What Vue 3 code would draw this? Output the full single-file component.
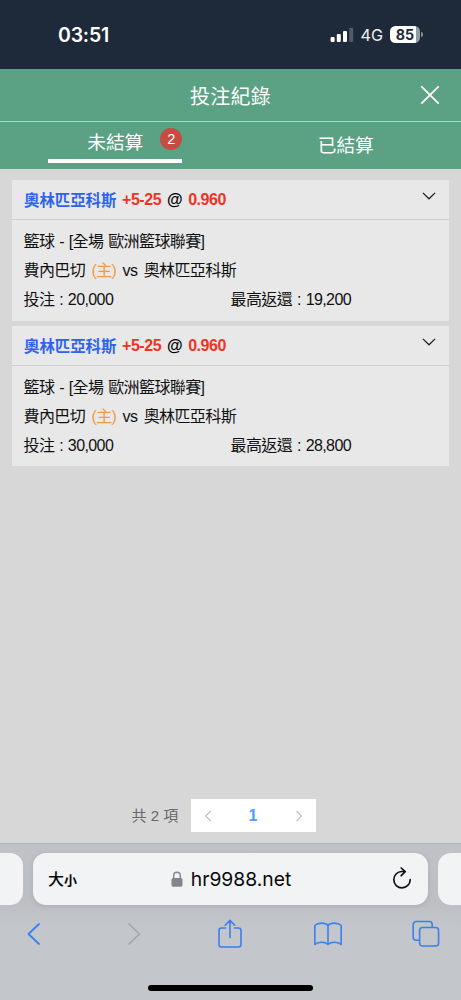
<script setup>
const bets = [
  { id: 1, stake: '20,000', payout: '19,200' },
  { id: 2, stake: '30,000', payout: '28,800' },
]
</script>

<template>
  <div class="screen">
    <div class="status">
      <span class="time">03:51</span>
      <div class="indicators">
        <svg class="signal" width="24" height="16" viewBox="0 0 24 16">
          <rect x="0.6" y="10" width="4" height="5" rx="1.1" fill="#fff" />
          <rect x="6.8" y="7" width="4" height="8" rx="1.1" fill="#fff" />
          <rect x="13" y="4" width="4" height="11" rx="1.1" fill="#fff" />
          <rect x="19.2" y="0.8" width="4" height="14.2" rx="1.1" fill="#505b67" />
        </svg>
        <span class="net">4G</span>
        <div class="battery"><span>85</span></div>
        <i class="cap"></i>
      </div>
    </div>

    <header class="title-bar">
      <h1>投注紀錄</h1>
      <svg class="close" width="20" height="20" viewBox="0 0 20 20">
        <path d="M1.3 1.3 18.7 18.7M18.7 1.3 1.3 18.7" stroke="#fff" stroke-width="1.8" fill="none" />
      </svg>
    </header>
    <nav class="tabs">
      <div class="tab">
        <div class="active"><span>未結算</span><b class="badge">2</b></div>
      </div>
      <div class="tab"><span class="settled">已結算</span></div>
    </nav>

    <main>
      <section v-for="bet in bets" :key="bet.id" class="card">
        <div class="head">
          <span class="pick">奧林匹亞科斯</span>
          <span class="odds">+5-25</span>
          <span class="at">@</span>
          <span class="odds">0.960</span>
          <svg class="chevron" width="14" height="8" viewBox="0 0 14 8">
            <path d="M.9.9 7 6.8 13.1.9" stroke="#222" stroke-width="1.3" fill="none" />
          </svg>
        </div>
        <div class="body">
          <div class="line league">籃球 - [全場 歐洲籃球聯賽]</div>
          <div class="line teams"><span>費內巴切</span><span class="home">(主)</span><span>vs</span><span>奧林匹亞科斯</span></div>
          <div class="line sums"><span>投注 : {{ bet.stake }}</span><span>最高返還 : {{ bet.payout }}</span></div>
        </div>
      </section>
      <div class="pager">
        <span class="total">共 2 項</span>
        <div class="pages">
          <svg width="8" height="12" viewBox="0 0 8 12"><path d="M6.6 1 1.6 6l5 5" stroke="#c0c4cc" stroke-width="1.4" fill="none" /></svg>
          <b>1</b>
          <svg width="8" height="12" viewBox="0 0 8 12"><path d="m1.5 1 5 5-5 5" stroke="#c0c4cc" stroke-width="1.4" fill="none" /></svg>
        </div>
      </div>
    </main>

    <footer>
      <div class="addresses">
        <div class="peek left"></div>
        <div class="address">
          <span class="aa">大<small>小</small></span>
          <div class="host">
            <svg width="12" height="16" viewBox="0 0 12 16">
              <path d="M2.7 8V4.6a3.3 3.3 0 0 1 6.6 0V8" stroke="#85868a" stroke-width="1.4" fill="none" />
              <rect x=".5" y="7" width="11" height="8.7" rx="1.6" fill="#85868a" />
            </svg>
            <span>hr9988.net</span>
          </div>
          <svg class="reload" width="20" height="23" viewBox="0 0 20 23">
            <path d="M11.2 4.500H9.800a8.200 8.200 0 1 0 8.400 8.200M9.200 1l4 3.700-4 4" stroke="#111" stroke-width="1.700" fill="none" stroke-linecap="round" stroke-linejoin="round" />
          </svg>
        </div>
        <div class="peek right"></div>
      </div>
      <div class="tools">
        <svg width="28" height="30" viewBox="0 0 28 30"><path d="M19 5 8.500 15 19 25" stroke="#3b7ff0" stroke-width="1.8" fill="none" stroke-linecap="round" stroke-linejoin="round" /></svg>
        <svg width="28" height="30" viewBox="0 0 28 30"><path d="M11 5 21.500 15 11 25" stroke="#a2a5aa" stroke-width="1.600" fill="none" stroke-linecap="round" stroke-linejoin="round" /></svg>
        <svg width="28" height="30" viewBox="0 0 28 30"><path d="M9.500 9H5.500A2.500 2.500 0 0 0 3 11.500v14A2.500 2.500 0 0 0 5.500 28h17a2.500 2.500 0 0 0 2.500-2.500v-14A2.500 2.500 0 0 0 22.500 9h-4M14 18.500V1.500M9.200 6.200 14 1.400l4.800 4.800" stroke="#3b7ff0" stroke-width="1.600" fill="none" stroke-linecap="round" stroke-linejoin="round" /></svg>
        <svg width="28" height="30" viewBox="0 0 28 30"><path d="M14 6.500C11.500 3.400 4.500 3.200.8 6.500v19c3.500-3 10-3 13.200 0 3.200-3 9.700-3 13.200 0v-19C23.500 3.200 16.500 3.400 14 6.500v19" stroke="#3b7ff0" stroke-width="1.600" fill="none" stroke-linejoin="round" /></svg>
        <svg width="28" height="30" viewBox="0 0 28 30"><path d="M7.500 21.200H4.200a3 3 0 0 1-3-3V5.500a3 3 0 0 1 3-3h13a3 3 0 0 1 3 3v2.800" stroke="#3b7ff0" stroke-width="1.600" fill="none" /><rect x="7.600" y="8.500" width="19" height="18.500" rx="3" stroke="#3b7ff0" stroke-width="1.600" fill="none" /></svg>
      </div>
      <div class="home-bar"></div>
    </footer>
  </div>
</template>

<style>
html, body { margin: 0; background: #d7d7d7; }
</style>

<style scoped>
* { box-sizing: border-box; }
.screen {
  width: 461px;
  height: 1000px;
  display: flex;
  flex-direction: column;
  overflow: hidden;
  background: #d7d7d7;
  color: #111;
  font-family: "Liberation Sans", "Noto Sans CJK TC", sans-serif;
}
svg { display: block; flex: none; }
.status {
  height: 69px;
  flex: none;
  background: #1e2a3a;
  color: #fff;
  display: flex;
  justify-content: space-between;
  align-items: center;
  padding: 0 38px 0 58px;
  font-family: Inter, sans-serif;
}
.time { font-size: 19.5px; font-weight: 600; letter-spacing: -0.2px; }
.indicators { display: flex; align-items: center; }
.signal { margin-top: 0; }
.net { font-size: 16.2px; margin: 0 7px 0 6px; color: #edf0f3; }
.battery {
  width: 30px;
  height: 17px;
  border-radius: 5.5px;
  background: linear-gradient(90deg, #fff 25.500px, #949aa2 25.500px);
  color: #1e2a3a;
  font-size: 14.2px;
  font-weight: 700;
  line-height: 17px;
  text-align: center;
}
.cap { width: 2px; height: 5px; margin-left: 1px; background: #858c95; border-radius: 0 2px 2px 0; }
.title-bar {
  height: 53px;
  flex: none;
  background: #5ba183;
  border-bottom: 1px solid #c3cfc2;
  display: grid;
  grid-template-columns: 1fr auto 1fr;
  align-items: center;
  color: #fff;
}
h1 { grid-column: 2; margin: 0; font-size: 20px; line-height: 30px; font-weight: 400; letter-spacing: .2px; padding-top: 3px; }
.close { justify-self: end; margin: 0 21px 1px 0; }
.tabs { height: 47px; flex: none; background: #5ba183; display: flex; color: #fff; font-size: 18.7px; }
.tab { flex: 1; display: flex; justify-content: center; }
.active { position: relative; width: 134px; height: 41px; border-bottom: 4px solid #fff; text-align: center; line-height: 42px; }
.badge {
  position: absolute;
  right: 0;
  top: 6px;
  width: 22px;
  height: 22px;
  border-radius: 50%;
  background: #c84b43;
  font-size: 14.5px;
  font-weight: 400;
  line-height: 22px;
}
.settled { line-height: 48px; }
main { flex: 1; display: flex; flex-direction: column; gap: 5px; padding: 11px 12px; }
.card { height: 141px; background: #e8e8e8; font-size: 16px; letter-spacing: -0.6px; }
.card + .card { height: 140px; }
.head {
  height: 40px;
  border-bottom: 1px solid #cfcfcf;
  display: flex;
  align-items: center;
  padding: 0 13px 0 12px;
  font-weight: 700;
}
.pick { color: #2e63ec; font-weight: 700; width: 98px; white-space: nowrap; font-size: 15.4px; letter-spacing: 0; padding-bottom: 2px; }
.odds { color: #ed3426; letter-spacing: -0.45px; }
.at { width: 27px; text-align: center; color: #000; }
.chevron { margin: 0 0 8px auto; }
.body { padding: 7px 12px 0 11.5px; }
.line { height: 29.2px; line-height: 29.2px; white-space: nowrap; word-spacing: 1px; }
.teams { display: flex; gap: 6.3px; }
.home { color: #f39b42; }
.sums { display: grid; grid-template-columns: 207px 1fr; }
.pager { margin-top: auto; margin-bottom: 0; display: flex; align-items: center; gap: 12px; padding-left: 119.5px; color: #66686b; font-size: 15px; }
.total { width: 47.5px; white-space: nowrap; padding-bottom: 2px; }
.pages { width: 125px; height: 33px; background: #fff; display: flex; align-items: center; justify-content: space-between; padding: 0 13.500px 0 12.500px; color: #519bff; }
.pages b { font-size: 16px; }
footer { height: 157px; flex: none; border-top: 1px solid #b1b3b7; background: linear-gradient(#bfc2c7, #bbbec3 55px, #c3c6cb 85px, #c3c6cb); }
.addresses { display: flex; gap: 10px; padding-top: 9px; }
.peek { width: 23px; height: 52px; background: #f2f3f5; }
.left { border-radius: 0 13px 13px 0; }
.right { border-radius: 13px 0 0 13px; }
.address {
  width: 395px;
  height: 52px;
  border-radius: 13px;
  background: #f2f3f5;
  box-shadow: 0 1px 5px rgba(60, 65, 75, .14);
  display: grid;
  grid-template-columns: 1fr auto 1fr;
  align-items: center;
  padding: 0 15px;
  color: #080808;
}
.aa { font: 500 16px/24px "Noto Sans CJK TC", sans-serif; }
.aa small { font-size: 13px; font-weight: 700; }
.host { display: flex; align-items: center; gap: 8px; padding-left: 1px; font: 400 19.3px/26px Inter, sans-serif; }
.reload { justify-self: end; margin-bottom: 2px; margin-right: 1px; }
.tools { display: flex; justify-content: space-between; padding: 14px 21px 0 20px; }
.home-bar { width: 165px; height: 6px; border-radius: 3px; margin: 36px auto 0; background: #000; }
</style>
